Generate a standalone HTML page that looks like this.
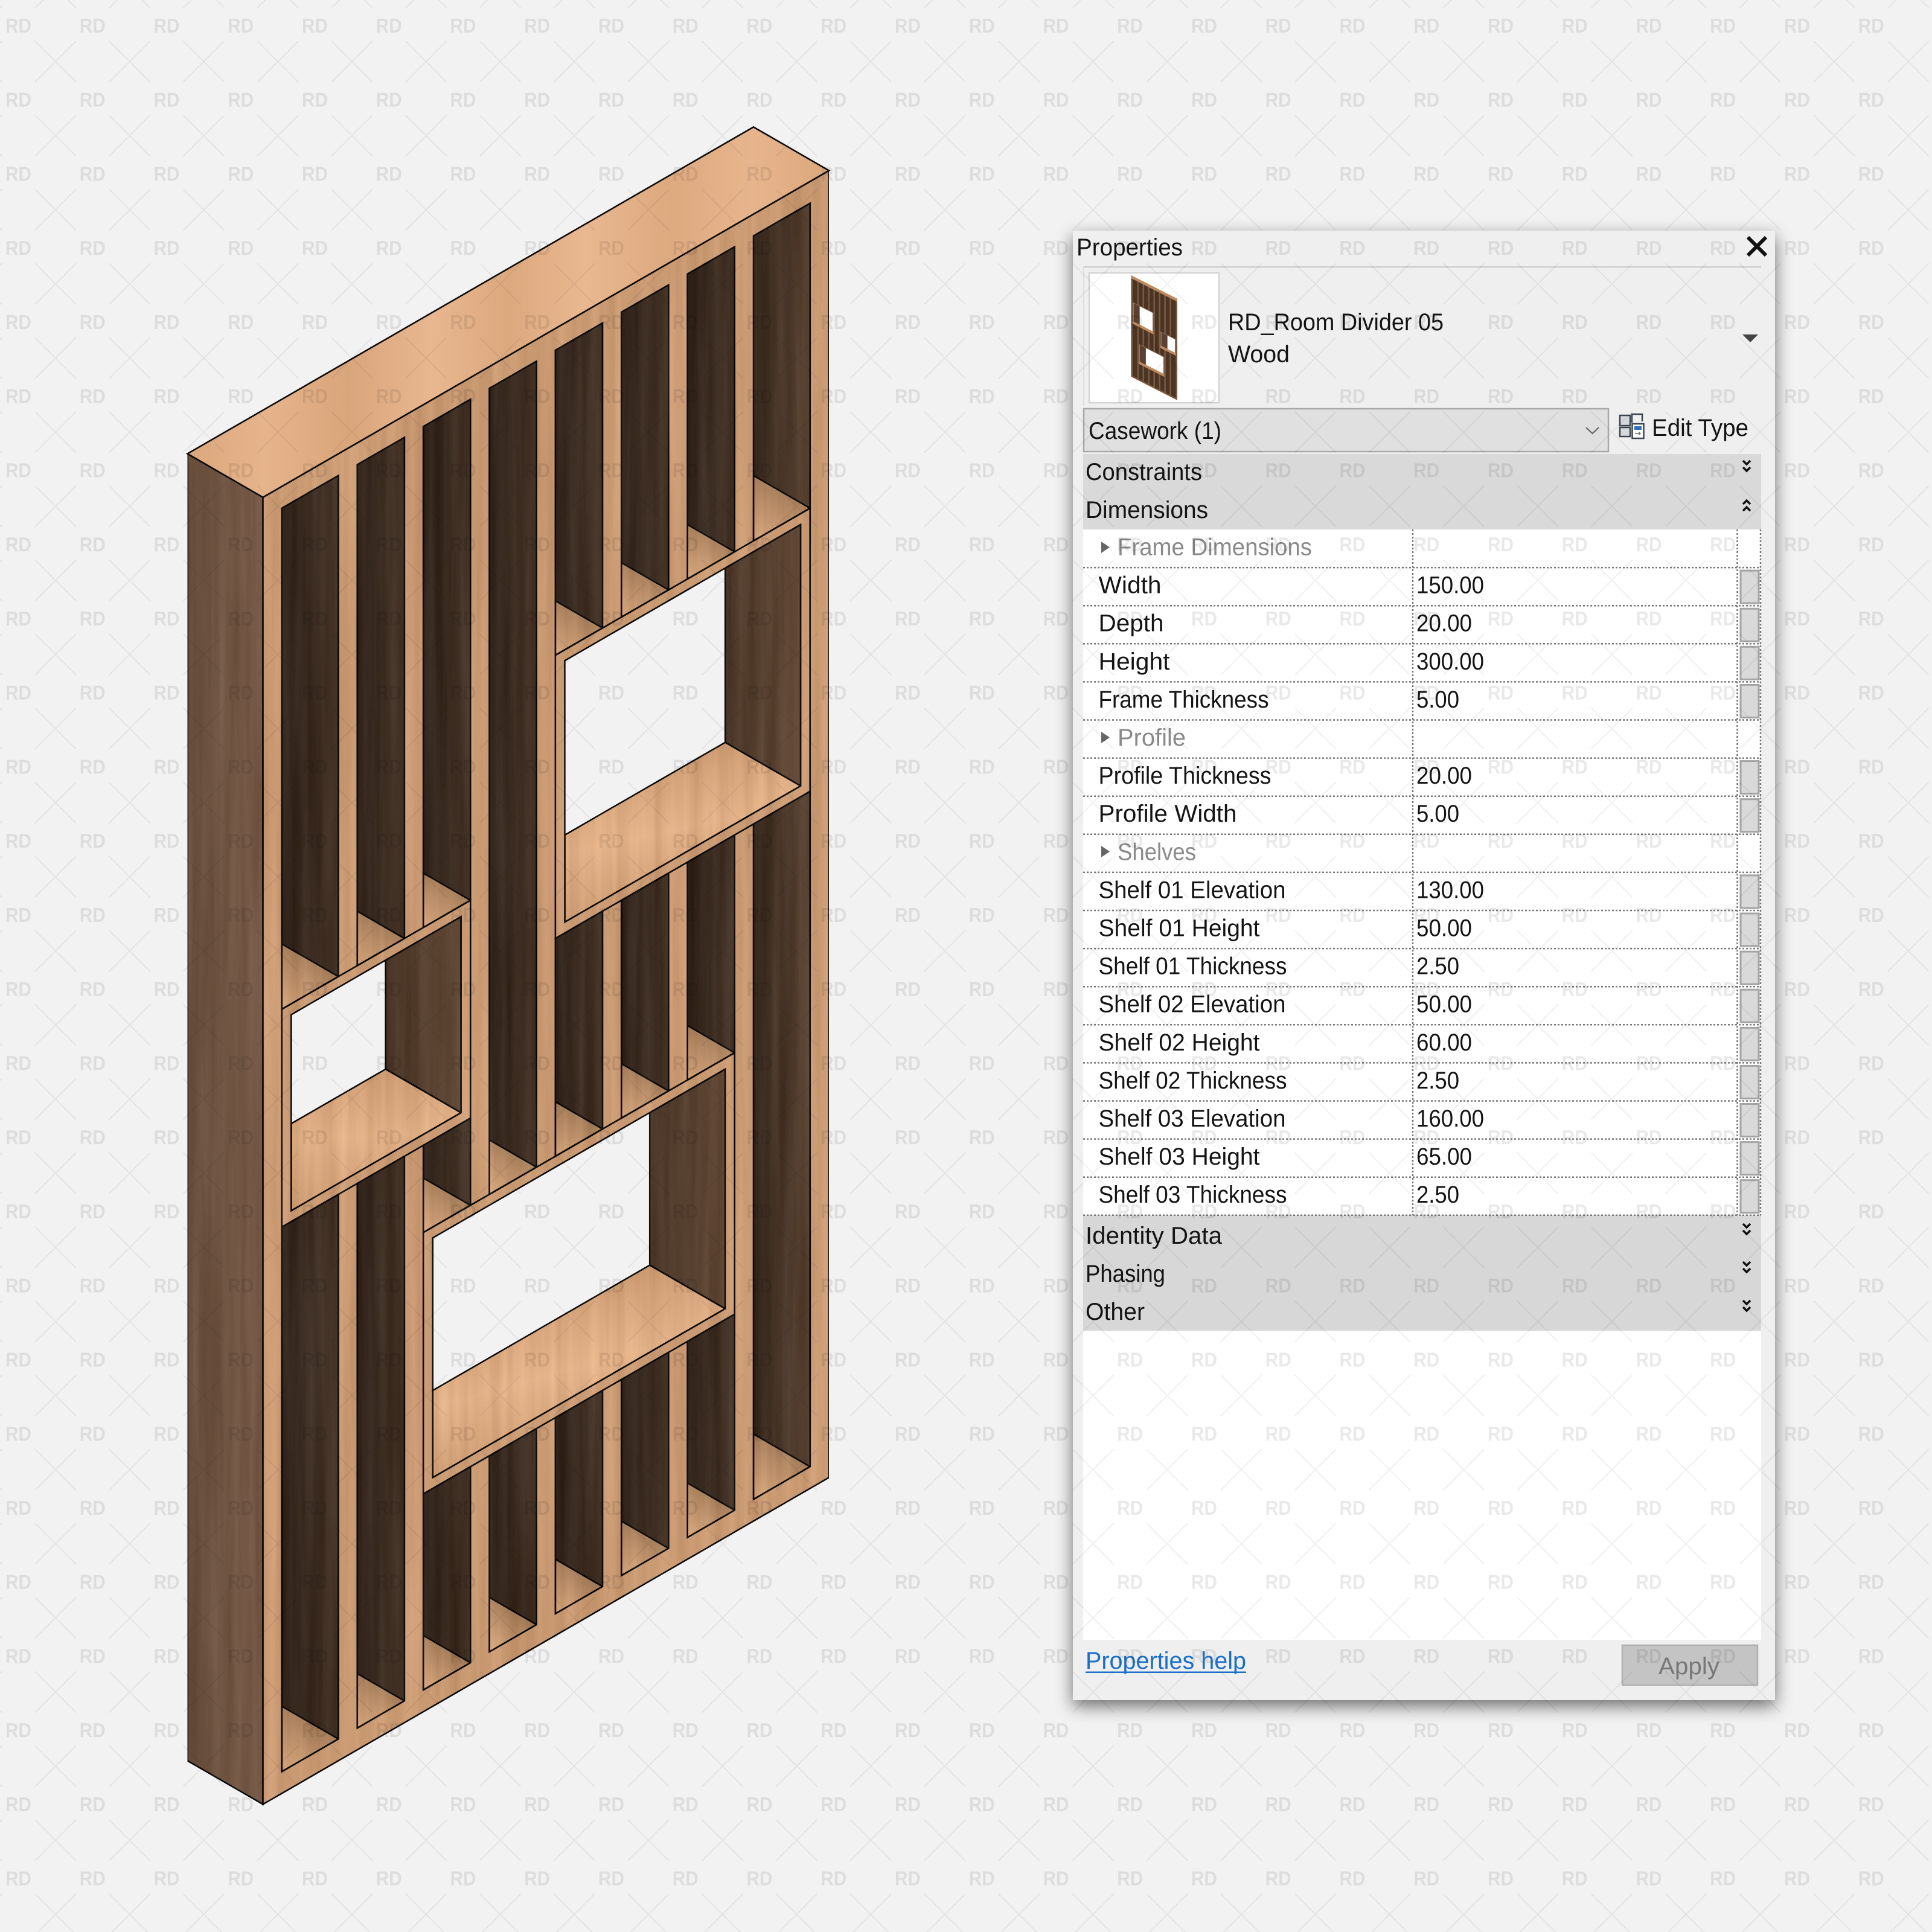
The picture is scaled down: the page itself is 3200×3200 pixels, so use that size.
<!DOCTYPE html>
<html lang="en">
<head>
<meta charset="utf-8">
<title>RD Room Divider 05</title>
<style>
html,body{margin:0;padding:0;background:#f2f2f2}
svg{display:block}
text{font-family:"Liberation Sans",sans-serif;font-size:40px;fill:#141414}
.g{fill:#8a8a8a}
.e{stroke:#0c0c0c;stroke-width:2.6;stroke-linejoin:miter;vector-effect:non-scaling-stroke}
</style>
</head>
<body>
<svg xmlns="http://www.w3.org/2000/svg" width="3200" height="3200" viewBox="0 0 3200 3200">
<defs>
<filter id="grain" x="0" y="0" width="1" height="1" color-interpolation-filters="sRGB">
<feTurbulence type="fractalNoise" baseFrequency="0.05 0.002" numOctaves="3" seed="4" result="n"/>
<feColorMatrix in="n" type="matrix" values="1 0 0 0 0 1 0 0 0 0 1 0 0 0 0 0 0 0 0 1" result="m"/>
<feComposite in="SourceGraphic" in2="m" operator="arithmetic" k1="0" k2="1" k3=".13" k4="-.065" result="c"/>
<feComposite in="c" in2="SourceAlpha" operator="in"/>
</filter>
<linearGradient id="dk" x1="0" y1="0" x2="1" y2="0"><stop offset="0" stop-color="#30231a"/><stop offset="1" stop-color="#453326"/></linearGradient>
<linearGradient id="dk2" x1="0" y1="0" x2="1" y2="0"><stop offset="0" stop-color="#35271c"/><stop offset="1" stop-color="#5a4332"/></linearGradient>
<linearGradient id="wall" x1="0" y1="0" x2="1" y2="0"><stop offset="0" stop-color="#4d392a"/><stop offset="1" stop-color="#614836"/></linearGradient>
<linearGradient id="side" x1="0" y1="0" x2="1" y2="0"><stop offset="0" stop-color="#674e3c"/><stop offset="1" stop-color="#775a47"/></linearGradient>
<linearGradient id="fl" x1="0" y1="0" x2="1" y2="1"><stop offset="0" stop-color="#d8a87e"/><stop offset=".5" stop-color="#a87f5c"/><stop offset="1" stop-color="#8f6c4e"/></linearGradient>
<linearGradient id="bf" x1="0" y1="0" x2="1" y2="1"><stop offset="0" stop-color="#cf9d74"/><stop offset=".4" stop-color="#e3b188"/><stop offset=".7" stop-color="#d5a379"/><stop offset="1" stop-color="#bd8e66"/></linearGradient>
<linearGradient id="top" gradientUnits="userSpaceOnUse" x1="-20" y1="0" x2="150" y2="0">
<stop offset="0" stop-color="#dba77d"/><stop offset=".12" stop-color="#e6b48b"/><stop offset=".25" stop-color="#d9a57b"/><stop offset=".38" stop-color="#e8b78f"/><stop offset=".5" stop-color="#dca87e"/><stop offset=".62" stop-color="#e9b890"/><stop offset=".75" stop-color="#dda97f"/><stop offset=".88" stop-color="#e7b58d"/><stop offset="1" stop-color="#dba77c"/>
</linearGradient>
<g id="cols">
<rect x="5" y="5" width="15" height="125"/><rect x="5" y="180" width="15" height="115"/>
<rect x="25" y="5" width="12.5" height="125"/><rect x="25" y="180" width="12.5" height="115"/>
<rect x="42.5" y="5" width="12.5" height="45"/><rect x="42.5" y="110" width="12.5" height="20"/><rect x="42.5" y="180" width="12.5" height="115"/>
<rect x="60" y="5" width="12.5" height="45"/><rect x="60" y="110" width="12.5" height="185"/>
<rect x="77.5" y="5" width="12.5" height="45"/><rect x="77.5" y="110" width="12.5" height="50"/><rect x="77.5" y="225" width="12.5" height="70"/>
<rect x="95" y="5" width="12.5" height="45"/><rect x="95" y="110" width="12.5" height="50"/><rect x="95" y="225" width="12.5" height="70"/>
<rect x="112.5" y="5" width="12.5" height="45"/><rect x="112.5" y="110" width="12.5" height="50"/><rect x="112.5" y="225" width="12.5" height="70"/>
<rect x="130" y="5" width="15" height="155"/><rect x="130" y="225" width="15" height="70"/>
</g>
<pattern id="wm" patternUnits="userSpaceOnUse" x="5" y="20" width="122.75" height="122.75">
<text x="4" y="34" textLength="43" lengthAdjust="spacingAndGlyphs" style="font-size:33px;font-weight:bold;fill:#000;fill-opacity:.085">RD</text>
<path d="M53 48L121 116M121 48L53 116" stroke="#000" stroke-opacity=".06" stroke-width="2" fill="none"/>
</pattern>
</defs>

<rect width="3200" height="3200" fill="#f2f2f2"/>

<!-- wooden divider -->
<g filter="url(#grain)">
<g transform="matrix(6.25,-3.608,0,-7.216,435.5,2988.5)">
<polygon class="e" fill="url(#side)" points="0,0 0,300 -20,320 -20,20"/>
<use href="#cols" fill="url(#dk)"/>
<rect x="130" y="5" width="15" height="155" fill="url(#dk2)"/><rect x="130" y="225" width="15" height="70" fill="url(#dk2)"/>
<g fill="url(#fl)">
<polygon class="e" points="5,5 20,5 5,20"/><polygon class="e" points="5,180 20,180 5,195"/>
<polygon class="e" points="25,5 37.5,5 25,17.5"/><polygon class="e" points="25,180 37.5,180 25,192.5"/>
<polygon class="e" points="42.5,5 55,5 42.5,17.5"/><polygon class="e" points="42.5,110 55,110 42.5,122.5"/><polygon class="e" points="42.5,180 55,180 42.5,192.5"/>
<polygon class="e" points="60,5 72.5,5 60,17.5"/><polygon class="e" points="60,110 72.5,110 60,122.5"/>
<polygon class="e" points="77.5,5 90,5 77.5,17.5"/><polygon class="e" points="77.5,110 90,110 77.5,122.5"/><polygon class="e" points="77.5,225 90,225 77.5,237.5"/>
<polygon class="e" points="95,5 107.5,5 95,17.5"/><polygon class="e" points="95,110 107.5,110 95,122.5"/><polygon class="e" points="95,225 107.5,225 95,237.5"/>
<polygon class="e" points="112.5,5 125,5 112.5,17.5"/><polygon class="e" points="112.5,110 125,110 112.5,122.5"/><polygon class="e" points="112.5,225 125,225 112.5,237.5"/>
<polygon class="e" points="130,5 145,5 130,20"/><polygon class="e" points="130,225 145,225 130,240"/>
</g>
<polygon class="e" fill="url(#wall)" points="142.5,162.5 142.5,222.5 122.5,222.5 122.5,182.5"/>
<polygon class="e" fill="url(#bf)" points="80,162.5 142.5,162.5 122.5,182.5 80,182.5"/>
<polygon class="e" fill="url(#wall)" points="52.5,132.5 52.5,177.5 32.5,177.5 32.5,152.5"/>
<polygon class="e" fill="url(#bf)" points="7.5,132.5 52.5,132.5 32.5,152.5 7.5,152.5"/>
<polygon class="e" fill="url(#wall)" points="122.5,52.5 122.5,107.5 102.5,107.5 102.5,72.5"/>
<polygon class="e" fill="url(#bf)" points="45,52.5 122.5,52.5 102.5,72.5 45,72.5"/>
<path class="e" fill="#ca9a73" fill-rule="evenodd" d="M0,0H150V300H0Z
M5,5h15v125h-15z M5,180h15v115h-15z
M25,5h12.5v125h-12.5z M25,180h12.5v115h-12.5z
M42.5,5h12.5v45h-12.5z M42.5,110h12.5v20h-12.5z M42.5,180h12.5v115h-12.5z
M60,5h12.5v45h-12.5z M60,110h12.5v185h-12.5z
M77.5,5h12.5v45h-12.5z M77.5,110h12.5v50h-12.5z M77.5,225h12.5v70h-12.5z
M95,5h12.5v45h-12.5z M95,110h12.5v50h-12.5z M95,225h12.5v70h-12.5z
M112.5,5h12.5v45h-12.5z M112.5,110h12.5v50h-12.5z M112.5,225h12.5v70h-12.5z
M130,5h15v155h-15z M130,225h15v70h-15z
M80,162.5H142.5V222.5H80Z M7.5,132.5H52.5V177.5H7.5Z M45,52.5H122.5V107.5H45Z"/>
<g fill="none">
<rect class="e" x="77.5" y="160" width="67.5" height="65"/>
<rect class="e" x="5" y="130" width="50" height="50"/>
<rect class="e" x="42.5" y="50" width="82.5" height="60"/>
</g>
</g>
</g>
<g transform="matrix(6.25,-3.608,0,-7.216,435.5,2988.5)">
<polygon class="e" fill="url(#top)" points="0,300 150,300 130,320 -20,320"/>
</g>

<!-- properties panel -->
<rect x="1777" y="382" width="1163" height="2434" fill="#000" fill-opacity=".55" style="filter:blur(14px)" transform="translate(0 10)"/>
<rect x="1777" y="382" width="1163" height="2434" fill="#efefef"/>
<rect x="1794" y="441" width="1123" height="2.5" fill="#d0d0d0"/>
<rect x="1794" y="441" width="1.5" height="232" fill="#dcdcdc"/>
<text x="1783" y="423" textLength="176" lengthAdjust="spacingAndGlyphs">Properties</text>
<path d="M2895 393L2925 423M2925 393L2895 423" stroke="#111" stroke-width="6" fill="none"/>

<!-- thumbnail -->
<rect x="1804" y="452" width="215" height="215" fill="#fff" stroke="#d4d4d4" stroke-width="2.5"/>
<g transform="matrix(-.511,-.26,0,-.557,1950,663)">
<rect x="0" y="0" width="150" height="300" fill="#7a5a42"/>
<use href="#cols" fill="#4a3424"/>
<rect x="80" y="162.5" width="62.5" height="60" fill="#fff"/>
<rect x="7.5" y="132.5" width="45" height="45" fill="#fff"/>
<rect x="45" y="52.5" width="77.5" height="55" fill="#fff"/>
<rect x="122" y="162.5" width="20" height="60" fill="#5a4030"/>
<rect x="32" y="132.5" width="20" height="45" fill="#5a4030"/>
<rect x="102" y="52.5" width="20" height="55" fill="#5a4030"/>
<rect x="77.5" y="160" width="67.5" height="8" fill="#c08a60"/>
<rect x="5" y="130" width="50" height="8" fill="#c08a60"/>
<rect x="42.5" y="50" width="82.5" height="8" fill="#c08a60"/>
<rect x="0" y="293" width="150" height="9" fill="#c08a60"/>
</g>

<text x="2034" y="547" textLength="357" lengthAdjust="spacingAndGlyphs">RD_Room Divider 05</text>
<text x="2034" y="600" textLength="102" lengthAdjust="spacingAndGlyphs">Wood</text>
<polygon points="2886,554 2912,554 2899,567" fill="#444"/>

<!-- combo -->
<rect x="1795" y="677" width="869" height="71" fill="#e0e0e0" stroke="#a8a8a8" stroke-width="2.5"/>
<text x="1803" y="727" textLength="220" lengthAdjust="spacingAndGlyphs">Casework (1)</text>
<path d="M2627 708L2637.5 718L2648 708" stroke="#666" stroke-width="2.2" fill="none"/>

<!-- edit type icon -->
<g fill="none" stroke="#3c4650" stroke-width="2.5">
<rect x="2683" y="688" width="17" height="17" fill="#d6d9dc"/>
<rect x="2683" y="708" width="17" height="15" fill="#d6d9dc"/>
<path d="M2703 700V686H2720V698"/>
<rect x="2703.5" y="702" width="19" height="24" fill="#fff"/>
</g>
<rect x="2707" y="706" width="12" height="6" fill="#2f6fb7"/>
<path d="M2708 718H2717M2714 715.500L2717 718L2714 720.500" stroke="#777" stroke-width="1.500" fill="none"/>
<text x="2736" y="722" textLength="160" lengthAdjust="spacingAndGlyphs">Edit Type</text>

<!-- grey bands -->
<rect x="1794" y="752" width="1123" height="125" fill="#d9d9d9"/>
<rect x="1794" y="2013" width="1123" height="191" fill="#d7d7d7"/>
<text x="1798" y="795" textLength="193" lengthAdjust="spacingAndGlyphs">Constraints</text>
<text x="1798" y="858" textLength="203" lengthAdjust="spacingAndGlyphs">Dimensions</text>
<text x="1798" y="2060" textLength="226" lengthAdjust="spacingAndGlyphs">Identity Data</text>
<text x="1798" y="2123" textLength="132" lengthAdjust="spacingAndGlyphs">Phasing</text>
<text x="1798" y="2186" textLength="98" lengthAdjust="spacingAndGlyphs">Other</text>
<g fill="none" stroke="#111" stroke-width="3.500">
<path d="M2887 763L2893 769L2899 763M2887 774L2893 780L2899 774"/>
<path d="M2887 835L2893 829L2899 835M2887 846L2893 840L2899 846"/>
<path d="M2887 2027L2893 2033L2899 2027M2887 2038L2893 2044L2899 2038"/>
<path d="M2887 2090L2893 2096L2899 2090M2887 2101L2893 2107L2899 2101"/>
<path d="M2887 2154L2893 2160L2899 2154M2887 2165L2893 2171L2899 2165"/>
</g>

<!-- table -->
<rect x="1794" y="877" width="1123" height="1136" fill="#fff"/>
<rect x="1794" y="2204" width="1123" height="512" fill="#fff"/>
<g fill="#d9d9d9" stroke="#a4a4a4" stroke-width="3">
<rect x="2883" y="945.100" width="30" height="54"/>
<rect x="2883" y="1008.200" width="30" height="54"/>
<rect x="2883" y="1071.300" width="30" height="54"/>
<rect x="2883" y="1134.400" width="30" height="54"/>
<rect x="2883" y="1260.600" width="30" height="54"/>
<rect x="2883" y="1323.700" width="30" height="54"/>
<rect x="2883" y="1449.900" width="30" height="54"/>
<rect x="2883" y="1513" width="30" height="54"/>
<rect x="2883" y="1576.100" width="30" height="54"/>
<rect x="2883" y="1639.200" width="30" height="54"/>
<rect x="2883" y="1702.300" width="30" height="54"/>
<rect x="2883" y="1765.400" width="30" height="54"/>
<rect x="2883" y="1828.500" width="30" height="54"/>
<rect x="2883" y="1891.600" width="30" height="54"/>
<rect x="2883" y="1954.700" width="30" height="54"/>
</g>
<path fill="none" stroke="#777" stroke-width="2.500" stroke-dasharray="3 3" d="M1794 940.100H2917M1794 1003.200H2917M1794 1066.300H2917M1794 1129.400H2917M1794 1192.500H2917M1794 1255.600H2917M1794 1318.700H2917M1794 1381.800H2917M1794 1444.900H2917M1794 1508H2917M1794 1571.100H2917M1794 1634.200H2917M1794 1697.300H2917M1794 1760.400H2917M1794 1823.500H2917M1794 1886.600H2917M1794 1949.700H2917M1794 2012.800H2917M2340 877V2013M2877.500 877V2013M2916 877V2013"/>

<polygon points="1824,897 1824,916 1838,906.500" fill="#666"/>
<polygon points="1824,1212 1824,1231 1838,1221.500" fill="#666"/>
<polygon points="1824,1401 1824,1420 1838,1410.500" fill="#666"/>
<text class="g" x="1851" y="919.500" textLength="322" lengthAdjust="spacingAndGlyphs">Frame Dimensions</text>
<text class="g" x="1851" y="1235" textLength="113" lengthAdjust="spacingAndGlyphs">Profile</text>
<text class="g" x="1851" y="1424.300" textLength="130" lengthAdjust="spacingAndGlyphs">Shelves</text>

<text x="1819.500" y="982.500" textLength="104" lengthAdjust="spacingAndGlyphs">Width</text>
<text x="1819.500" y="1045.700" textLength="108" lengthAdjust="spacingAndGlyphs">Depth</text>
<text x="1819.500" y="1108.800" textLength="118" lengthAdjust="spacingAndGlyphs">Height</text>
<text x="1819.500" y="1171.900" textLength="282" lengthAdjust="spacingAndGlyphs">Frame Thickness</text>
<text x="1819.500" y="1298.100" textLength="286" lengthAdjust="spacingAndGlyphs">Profile Thickness</text>
<text x="1819.500" y="1361.200" textLength="229" lengthAdjust="spacingAndGlyphs">Profile Width</text>
<text x="1819.500" y="1487.400" textLength="310" lengthAdjust="spacingAndGlyphs">Shelf 01 Elevation</text>
<text x="1819.500" y="1550.500" textLength="267" lengthAdjust="spacingAndGlyphs">Shelf 01 Height</text>
<text x="1819.500" y="1613.600" textLength="312" lengthAdjust="spacingAndGlyphs">Shelf 01 Thickness</text>
<text x="1819.500" y="1676.700" textLength="310" lengthAdjust="spacingAndGlyphs">Shelf 02 Elevation</text>
<text x="1819.500" y="1739.800" textLength="267" lengthAdjust="spacingAndGlyphs">Shelf 02 Height</text>
<text x="1819.500" y="1802.900" textLength="312" lengthAdjust="spacingAndGlyphs">Shelf 02 Thickness</text>
<text x="1819.500" y="1866" textLength="310" lengthAdjust="spacingAndGlyphs">Shelf 03 Elevation</text>
<text x="1819.500" y="1929.100" textLength="267" lengthAdjust="spacingAndGlyphs">Shelf 03 Height</text>
<text x="1819.500" y="1992.200" textLength="312" lengthAdjust="spacingAndGlyphs">Shelf 03 Thickness</text>

<text x="2346" y="982.500" textLength="112" lengthAdjust="spacingAndGlyphs">150.00</text>
<text x="2346" y="1045.700" textLength="92" lengthAdjust="spacingAndGlyphs">20.00</text>
<text x="2346" y="1108.800" textLength="112" lengthAdjust="spacingAndGlyphs">300.00</text>
<text x="2346" y="1171.900" textLength="71" lengthAdjust="spacingAndGlyphs">5.00</text>
<text x="2346" y="1298.100" textLength="92" lengthAdjust="spacingAndGlyphs">20.00</text>
<text x="2346" y="1361.200" textLength="71" lengthAdjust="spacingAndGlyphs">5.00</text>
<text x="2346" y="1487.400" textLength="112" lengthAdjust="spacingAndGlyphs">130.00</text>
<text x="2346" y="1550.500" textLength="92" lengthAdjust="spacingAndGlyphs">50.00</text>
<text x="2346" y="1613.600" textLength="71" lengthAdjust="spacingAndGlyphs">2.50</text>
<text x="2346" y="1676.700" textLength="92" lengthAdjust="spacingAndGlyphs">50.00</text>
<text x="2346" y="1739.800" textLength="92" lengthAdjust="spacingAndGlyphs">60.00</text>
<text x="2346" y="1802.900" textLength="71" lengthAdjust="spacingAndGlyphs">2.50</text>
<text x="2346" y="1866" textLength="112" lengthAdjust="spacingAndGlyphs">160.00</text>
<text x="2346" y="1929.100" textLength="92" lengthAdjust="spacingAndGlyphs">65.00</text>
<text x="2346" y="1992.200" textLength="71" lengthAdjust="spacingAndGlyphs">2.50</text>

<!-- footer -->
<text x="1798" y="2764" textLength="266" lengthAdjust="spacingAndGlyphs" style="fill:#1a6fc9">Properties help</text>
<rect x="1798" y="2768.500" width="266" height="2.500" fill="#1a6fc9"/>
<rect x="2687" y="2725" width="224" height="66" fill="#c4c4c4" stroke="#b0b0b0" stroke-width="2.500"/>
<text x="2747" y="2773" textLength="101" lengthAdjust="spacingAndGlyphs" style="fill:#777">Apply</text>

<!-- watermark -->
<rect width="3200" height="3200" fill="url(#wm)"/>
</svg>
</body>
</html>
